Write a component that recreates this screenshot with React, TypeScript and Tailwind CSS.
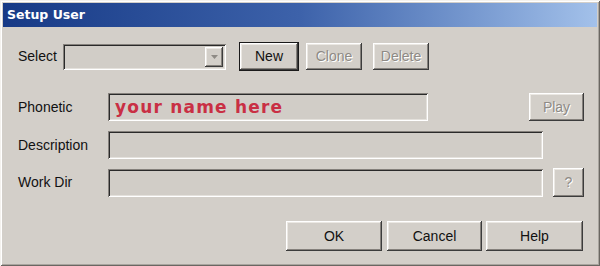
import React from 'react'

const raised =
  'shadow-[inset_-1px_-1px_#3c3c3c,inset_1px_1px_#ffffff,inset_-2px_-2px_#85817c,inset_2px_2px_#ebe8e3]'
const sunken =
  'shadow-[inset_1px_1px_#85817c,inset_-1px_-1px_#ffffff,inset_2px_2px_#2a2a2a,inset_-2px_-2px_#e4e1dc]'

function Btn({ label, w, h, disabled, def }: { label: string; w: string; h: string; disabled?: boolean; def?: boolean }) {
  return (
    <div
      className={`${w} ${h} shrink-0 flex items-center justify-center bg-[#d3cfc9] text-[14px] ${
        def ? 'outline outline-1 outline-[#1a1a1a] ' : ''
      }${raised} ${disabled ? 'text-[#8e8a85] [text-shadow:1px_1px_0_#ffffff]' : 'text-[#111]'}`}
    >
      {label}
    </div>
  )
}

function Field({ w, children }: { w: string; children?: React.ReactNode }) {
  return <div className={`${w} h-[28px] shrink-0 bg-[#d1cdc7] ${sunken} flex items-center pl-[7px]`}>{children}</div>
}

export default function App() {
  return (
    <div
      className="w-[600px] h-[266px] bg-[#d3cfc9] p-[3px] shadow-[inset_1px_1px_#f4f2ee,inset_-1px_-1px_#6a6762,inset_2px_2px_#ffffff,inset_-2px_-2px_#a9a59f] overflow-hidden flex flex-col"
      style={{ fontFamily: '"Liberation Sans", Arial, sans-serif' }}
    >
      <div className="h-[24px] shrink-0 bg-gradient-to-r from-[#173a86] via-[#3d62aa] to-[#a3c1ea] flex items-center pl-[4px]">
        <span className="text-white font-bold text-[12.5px]" style={{ fontFamily: '"DejaVu Sans", Verdana, sans-serif' }}>
          Setup User
        </span>
      </div>

      <div className="flex flex-col pl-[15px] pt-[16px]">
        {/* row 1 */}
        <div className="flex items-center h-[27px]">
          <span className="w-[45px] text-[14px] text-[#111]">Select</span>
          <div className={`w-[163px] h-[26px] bg-[#d1cdc7] ${sunken} flex items-center justify-end pr-[3px]`}>
            <div className={`w-[18px] h-[20px] bg-[#d3cfc9] ${raised} flex items-center justify-center`}>
              <svg width="7" height="4" viewBox="0 0 7 4">
                <path d="M0 0h7L3.5 4z" fill="#8e8a85" />
              </svg>
            </div>
          </div>
          <div className="w-[14px]" />
          <Btn label="New" w="w-[58px]" h="h-[27px]" def />
          <div className="w-[8px]" />
          <Btn label="Clone" w="w-[56px]" h="h-[27px]" disabled />
          <div className="w-[11px]" />
          <Btn label="Delete" w="w-[56px]" h="h-[27px]" disabled />
        </div>

        {/* row 2 */}
        <div className="flex items-center h-[28px] mt-[23px]">
          <span className="w-[90px] text-[14px] text-[#111]">Phonetic</span>
          <Field w="w-[320px]">
            <span
              className="text-[#c92f44] font-bold text-[17px] leading-none tracking-[1.2px]"
              style={{ fontFamily: '"DejaVu Sans", Verdana, sans-serif' }}
            >
              your name here
            </span>
          </Field>
          <div className="w-[101px]" />
          <Btn label="Play" w="w-[55px]" h="h-[28px]" disabled />
        </div>

        {/* row 3 */}
        <div className="flex items-center h-[28px] mt-[10px]">
          <span className="w-[90px] text-[14px] text-[#111]">Description</span>
          <Field w="w-[435px]" />
        </div>

        {/* row 4 */}
        <div className="flex items-center h-[29px] mt-[9px]">
          <span className="w-[90px] text-[14px] text-[#111]">Work Dir</span>
          <Field w="w-[435px]" />
          <div className="w-[10px]" />
          <Btn label="?" w="w-[31px]" h="h-[29px]" disabled />
        </div>

        {/* row 5 */}
        <div className="flex items-center h-[30px] mt-[24px] pl-[268px]">
          <Btn label="OK" w="w-[96px]" h="h-[30px]" />
          <div className="w-[5px]" />
          <Btn label="Cancel" w="w-[95px]" h="h-[30px]" />
          <div className="w-[4px]" />
          <Btn label="Help" w="w-[97px]" h="h-[30px]" />
        </div>
      </div>
    </div>
  )
}
